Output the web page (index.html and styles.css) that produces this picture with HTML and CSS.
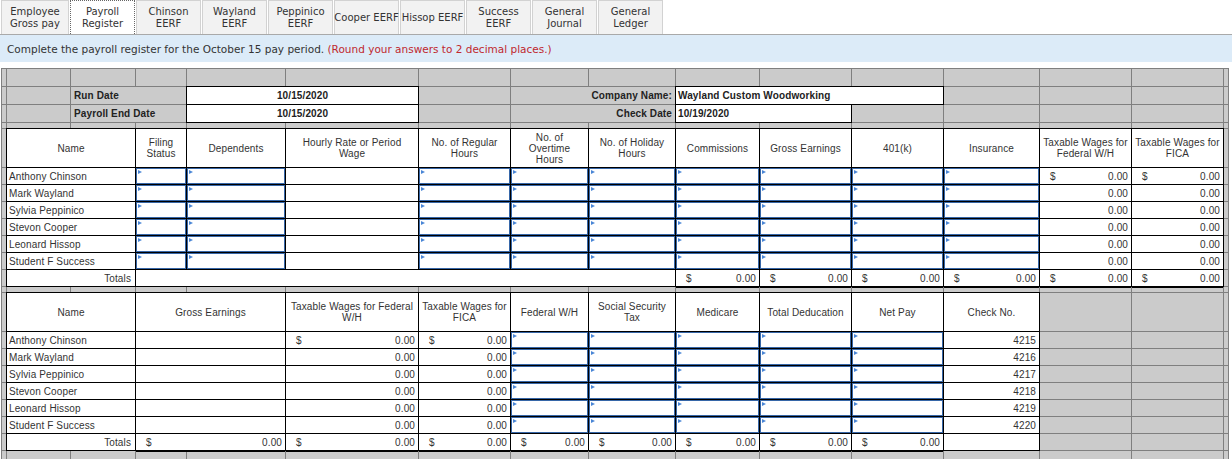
FILE: index.html
```html
<!DOCTYPE html>
<html lang="en">
<head>
<meta charset="utf-8">
<title>Payroll Register</title>
<link rel="stylesheet" href="styles.css">
</head>
<body>
<div class="tabs">
  <div class="tab first">Employee<br>Gross pay</div>
  <div class="tab active">Payroll<br>Register</div>
  <div class="tab">Chinson<br>EERF</div>
  <div class="tab">Wayland<br>EERF</div>
  <div class="tab">Peppinico<br>EERF</div>
  <div class="tab">Cooper EERF</div>
  <div class="tab">Hissop EERF</div>
  <div class="tab">Success<br>EERF</div>
  <div class="tab">General<br>Journal</div>
  <div class="tab">General<br>Ledger</div>
</div>
<div class="note">Complete the payroll register for the October 15 pay period.&nbsp;<span class="red">(Round your answers to 2 decimal places.)</span></div>

<div class="sheet">
  <!-- row 1 -->
  <div class="g"></div><div class="g"></div><div class="g"></div><div class="g"></div><div class="g"></div><div class="g"></div><div class="g"></div><div class="g"></div><div class="g"></div><div class="g"></div><div class="g"></div><div class="g"></div><div class="g"></div><div class="g"></div><div class="g"></div><div class="g"></div>
  <!-- run date -->
  <div class="g"></div><div class="g"></div>
  <div class="g s2 lb">Run Date</div>
  <div class="w s2 val">10/15/2020</div>
  <div class="g"></div>
  <div class="g s2 lbr">Company Name:</div>
  <div class="w s3 valL">Wayland Custom Woodworking</div>
  <div class="g"></div><div class="g"></div><div class="g"></div><div class="g"></div>
  <!-- payroll end date -->
  <div class="g"></div><div class="g"></div>
  <div class="g s2 lb">Payroll End Date</div>
  <div class="w s2 val">10/15/2020</div>
  <div class="g"></div>
  <div class="g s2 lbr">Check Date</div>
  <div class="w s2 valL">10/19/2020</div>
  <div class="g"></div><div class="g"></div><div class="g"></div><div class="g"></div><div class="g"></div>
  <!-- thin -->
  <div class="g"></div><div class="g"></div><div class="g"></div><div class="g"></div><div class="g"></div><div class="g"></div><div class="g"></div><div class="g"></div><div class="g"></div><div class="g"></div><div class="g"></div><div class="g"></div><div class="g"></div><div class="g"></div><div class="g"></div><div class="g"></div>

  <!-- header 1 -->
  <div class="g"></div>
  <div class="w hd s2">Name</div>
  <div class="w hd">Filing<br>Status</div>
  <div class="w hd">Dependents</div>
  <div class="w hd">Hourly Rate or Period<br>Wage</div>
  <div class="w hd">No. of Regular<br>Hours</div>
  <div class="w hd">No. of<br>Overtime<br>Hours</div>
  <div class="w hd">No. of Holiday<br>Hours</div>
  <div class="w hd">Commissions</div>
  <div class="w hd">Gross Earnings</div>
  <div class="w hd">401(k)</div>
  <div class="w hd">Insurance</div>
  <div class="w hd">Taxable Wages for<br>Federal W/H</div>
  <div class="w hd">Taxable Wages for<br>FICA</div>
  <div class="g"></div>

  <!-- data 1 -->
  <div class="g"></div><div class="w nm s2">Anthony Chinson</div>
  <div class="in"></div><div class="in"></div><div class="w"></div><div class="in"></div><div class="in"></div><div class="in"></div><div class="in"></div><div class="in"></div><div class="in"></div><div class="in"></div>
  <div class="w num"><span>$</span><span>0.00</span></div><div class="w num"><span>$</span><span>0.00</span></div>
  <div class="g"></div>

  <div class="g"></div><div class="w nm s2">Mark Wayland</div>
  <div class="in"></div><div class="in"></div><div class="w"></div><div class="in"></div><div class="in"></div><div class="in"></div><div class="in"></div><div class="in"></div><div class="in"></div><div class="in"></div>
  <div class="w num"><span></span><span>0.00</span></div><div class="w num"><span></span><span>0.00</span></div>
  <div class="g"></div>

  <div class="g"></div><div class="w nm s2">Sylvia Peppinico</div>
  <div class="in"></div><div class="in"></div><div class="w"></div><div class="in"></div><div class="in"></div><div class="in"></div><div class="in"></div><div class="in"></div><div class="in"></div><div class="in"></div>
  <div class="w num"><span></span><span>0.00</span></div><div class="w num"><span></span><span>0.00</span></div>
  <div class="g"></div>

  <div class="g"></div><div class="w nm s2">Stevon Cooper</div>
  <div class="in"></div><div class="in"></div><div class="w"></div><div class="in"></div><div class="in"></div><div class="in"></div><div class="in"></div><div class="in"></div><div class="in"></div><div class="in"></div>
  <div class="w num"><span></span><span>0.00</span></div><div class="w num"><span></span><span>0.00</span></div>
  <div class="g"></div>

  <div class="g"></div><div class="w nm s2">Leonard Hissop</div>
  <div class="in"></div><div class="in"></div><div class="w"></div><div class="in"></div><div class="in"></div><div class="in"></div><div class="in"></div><div class="in"></div><div class="in"></div><div class="in"></div>
  <div class="w num"><span></span><span>0.00</span></div><div class="w num"><span></span><span>0.00</span></div>
  <div class="g"></div>

  <div class="g"></div><div class="w nm s2">Student F Success</div>
  <div class="in"></div><div class="in"></div><div class="w"></div><div class="in"></div><div class="in"></div><div class="in"></div><div class="in"></div><div class="in"></div><div class="in"></div><div class="in"></div>
  <div class="w num"><span></span><span>0.00</span></div><div class="w num"><span></span><span>0.00</span></div>
  <div class="g"></div>

  <!-- totals 1 -->
  <div class="g"></div><div class="w nm tr s2">Totals</div>
  <div class="w s6"></div>
  <div class="w num tot"><span>$</span><span>0.00</span></div>
  <div class="w num tot"><span>$</span><span>0.00</span></div>
  <div class="w num tot"><span>$</span><span>0.00</span></div>
  <div class="w num tot"><span>$</span><span>0.00</span></div>
  <div class="w num tot"><span>$</span><span>0.00</span></div>
  <div class="w num tot"><span>$</span><span>0.00</span></div>
  <div class="g"></div>

  <!-- thin -->
  <div class="g"></div><div class="g"></div><div class="g"></div><div class="g"></div><div class="g"></div><div class="g"></div><div class="g"></div><div class="g"></div><div class="g"></div><div class="g"></div><div class="g"></div><div class="g"></div><div class="g"></div><div class="g"></div><div class="g"></div><div class="g"></div>

  <!-- header 2 -->
  <div class="g"></div>
  <div class="w hd s2">Name</div>
  <div class="w hd s2">Gross Earnings</div>
  <div class="w hd">Taxable Wages for Federal<br>W/H</div>
  <div class="w hd">Taxable Wages for<br>FICA</div>
  <div class="w hd">Federal W/H</div>
  <div class="w hd">Social Security<br>Tax</div>
  <div class="w hd">Medicare</div>
  <div class="w hd">Total Deducation</div>
  <div class="w hd">Net Pay</div>
  <div class="w hd">Check No.</div>
  <div class="g"></div><div class="g"></div><div class="g"></div>

  <!-- data 2 -->
  <div class="g"></div><div class="w nm s2">Anthony Chinson</div><div class="w s2"></div>
  <div class="w num"><span>$</span><span>0.00</span></div><div class="w num"><span>$</span><span>0.00</span></div>
  <div class="in"></div><div class="in"></div><div class="in"></div><div class="in"></div><div class="in"></div>
  <div class="w num"><span></span><span>4215</span></div>
  <div class="g"></div><div class="g"></div><div class="g"></div>

  <div class="g"></div><div class="w nm s2">Mark Wayland</div><div class="w s2"></div>
  <div class="w num"><span></span><span>0.00</span></div><div class="w num"><span></span><span>0.00</span></div>
  <div class="in"></div><div class="in"></div><div class="in"></div><div class="in"></div><div class="in"></div>
  <div class="w num"><span></span><span>4216</span></div>
  <div class="g"></div><div class="g"></div><div class="g"></div>

  <div class="g"></div><div class="w nm s2">Sylvia Peppinico</div><div class="w s2"></div>
  <div class="w num"><span></span><span>0.00</span></div><div class="w num"><span></span><span>0.00</span></div>
  <div class="in"></div><div class="in"></div><div class="in"></div><div class="in"></div><div class="in"></div>
  <div class="w num"><span></span><span>4217</span></div>
  <div class="g"></div><div class="g"></div><div class="g"></div>

  <div class="g"></div><div class="w nm s2">Stevon Cooper</div><div class="w s2"></div>
  <div class="w num"><span></span><span>0.00</span></div><div class="w num"><span></span><span>0.00</span></div>
  <div class="in"></div><div class="in"></div><div class="in"></div><div class="in"></div><div class="in"></div>
  <div class="w num"><span></span><span>4218</span></div>
  <div class="g"></div><div class="g"></div><div class="g"></div>

  <div class="g"></div><div class="w nm s2">Leonard Hissop</div><div class="w s2"></div>
  <div class="w num"><span></span><span>0.00</span></div><div class="w num"><span></span><span>0.00</span></div>
  <div class="in"></div><div class="in"></div><div class="in"></div><div class="in"></div><div class="in"></div>
  <div class="w num"><span></span><span>4219</span></div>
  <div class="g"></div><div class="g"></div><div class="g"></div>

  <div class="g"></div><div class="w nm s2">Student F Success</div><div class="w s2"></div>
  <div class="w num"><span></span><span>0.00</span></div><div class="w num"><span></span><span>0.00</span></div>
  <div class="in"></div><div class="in"></div><div class="in"></div><div class="in"></div><div class="in"></div>
  <div class="w num"><span></span><span>4220</span></div>
  <div class="g"></div><div class="g"></div><div class="g"></div>

  <!-- totals 2 -->
  <div class="g"></div><div class="w nm tr s2">Totals</div>
  <div class="w num tot s2"><span>$</span><span>0.00</span></div>
  <div class="w num tot"><span>$</span><span>0.00</span></div>
  <div class="w num tot"><span>$</span><span>0.00</span></div>
  <div class="w num tot"><span>$</span><span>0.00</span></div>
  <div class="w num tot"><span>$</span><span>0.00</span></div>
  <div class="w num tot"><span>$</span><span>0.00</span></div>
  <div class="w num tot"><span>$</span><span>0.00</span></div>
  <div class="w num tot"><span>$</span><span>0.00</span></div>
  <div class="w"></div>
  <div class="g"></div><div class="g"></div><div class="g"></div>

  <!-- last -->
  <div class="g"></div><div class="g"></div><div class="g"></div><div class="g"></div><div class="g"></div><div class="g"></div><div class="g"></div><div class="g"></div><div class="g"></div><div class="g"></div><div class="g"></div><div class="g"></div><div class="g"></div><div class="g"></div><div class="g"></div><div class="g"></div>
</div>
</body>
</html>
```
FILE: styles.css
```css
* { box-sizing: border-box; }
html, body { margin: 0; padding: 0; }
body {
  background: #fff;
  font-family: "DejaVu Sans", Verdana, sans-serif;
  overflow: hidden;
  width: 1232px;
  height: 459px;
}

.tabs {
  display: flex;
  height: 35px;
  border-bottom: 1px solid #a9a9a9;
  padding-left: 1px;
}
.tab {
  width: 65px;
  margin-right: 1px;
  border: 1px solid #d2d2d2;
  border-bottom: none;
  background: #f2f2f2;
  display: flex;
  align-items: center;
  justify-content: center;
  text-align: center;
  font-size: 10px;
  line-height: 12px;
  color: #333;
  white-space: nowrap;
}
.tab.first { width: 68px; }
.tab.active {
  background: #fff;
  border: 1px dotted #666;
  border-bottom: none;
}

.note {
  height: 27px;
  margin-bottom: 6px;
  background: #dcebf8;
  display: flex;
  align-items: center;
  padding-left: 7px;
  padding-top: 1px;
  font-size: 10.5px;
  color: #333;
}
.note .red { color: #c0282e; }

.sheet {
  display: grid;
  grid-template-columns: 4px 63px 64px 50px 98px 132px 91px 77px 86px 83px 91px 91px 95px 91px 91px 4px;
  grid-template-rows: 17px 17px 17px 5px 38px repeat(7, 16px) 5px 38px repeat(7, 16px) 12px;
  gap: 1px;
  padding: 1px;
  margin-left: 1px;
  width: max-content;
  background: #7f7f7f;
  font-family: "Liberation Sans", Arial, sans-serif;
  font-size: 10px;
  letter-spacing: 0.12px;
  color: #333;
}

.s2 { grid-column: span 2; }
.s3 { grid-column: span 3; }
.s6 { grid-column: span 6; }

.g { background: #cbcbcb; }
.w { background: #fff; box-shadow: 0 0 0 1px #000; }

.in {
  position: relative;
  background: #fff;
  box-shadow: 0 0 0 1px #000;
  border: 1px solid #3767a8;
}
.in::before {
  content: "";
  position: absolute;
  top: 1px;
  left: 1px;
  border-left: 4px solid #4a86d6;
  border-top: 2px solid transparent;
  border-bottom: 2px solid transparent;
}

.lb, .lbr, .val, .valL {
  display: flex;
  align-items: center;
  font-weight: bold;
  color: #222;
  white-space: nowrap;
}
.lb { padding-left: 3px; }
.lbr { justify-content: flex-end; padding-right: 3px; }
.val { justify-content: center; }
.valL { padding-left: 2px; }

.hd {
  display: flex;
  align-items: center;
  justify-content: center;
  text-align: center;
  line-height: 11px;
  padding: 0 1px;
  white-space: nowrap;
}

.nm {
  display: flex;
  align-items: center;
  padding-left: 2px;
  white-space: nowrap;
}
.nm.tr { justify-content: flex-end; padding-right: 4px; }

.num {
  display: flex;
  align-items: center;
  justify-content: space-between;
  padding: 0 3px 0 10px;
  white-space: nowrap;
}

.tot {
  position: relative;
  z-index: 1;
  box-shadow: 0 0 0 1px #000, 0 2px 0 0 #000;
}
```
